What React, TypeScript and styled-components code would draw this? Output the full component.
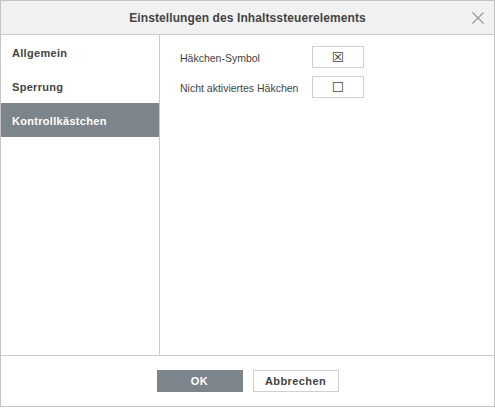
import React, { useState } from 'react';
import styled, { createGlobalStyle } from 'styled-components';

const GlobalStyle = createGlobalStyle`
    html, body {
        margin: 0;
        padding: 0;
        background: #ffffff;
    }
    body {
        font-family: 'Liberation Sans', Arial, sans-serif;
        color: #444444;
    }
`;

const MENU = ['Allgemein', 'Sperrung', 'Kontrollkästchen'];

const App: React.FC = () => {
    const [active, setActive] = useState(2);

    return (
        <>
            <GlobalStyle />
            <Dialog>
                <Header>
                    <Title>Einstellungen des Inhaltssteuerelements</Title>
                    <CloseButton aria-label="Schließen">
                        <svg width="12" height="12" viewBox="0 0 12 12">
                            <path
                                d="M0.5 0.5 L11.5 11.5 M11.5 0.5 L0.5 11.5"
                                stroke="#9a9a9a"
                                strokeWidth="1.2"
                                fill="none"
                            />
                        </svg>
                    </CloseButton>
                </Header>
                <Body>
                    <Sidebar>
                        {MENU.map((item, index) => (
                            <MenuItem
                                key={item}
                                $active={index === active}
                                onClick={() => setActive(index)}
                            >
                                {item}
                            </MenuItem>
                        ))}
                    </Sidebar>
                    <Content>
                        <Row>
                            <Label>Häkchen-Symbol</Label>
                            <SymbolButton>☒</SymbolButton>
                        </Row>
                        <Row>
                            <Label>Nicht aktiviertes Häkchen</Label>
                            <SymbolButton>☐</SymbolButton>
                        </Row>
                    </Content>
                </Body>
                <Footer>
                    <Button $primary>OK</Button>
                    <Button>Abbrechen</Button>
                </Footer>
            </Dialog>
        </>
    );
};

export default App;

const Dialog = styled.div`
    box-sizing: border-box;
    width: 495px;
    height: 407px;
    border: 1px solid #c4c4c4;
    display: flex;
    flex-direction: column;
    background: #ffffff;
`;

const Header = styled.div`
    position: relative;
    height: 33px;
    flex: none;
    background: #f1f1f1;
    border-bottom: 1px solid #cbcbcb;
    display: flex;
    align-items: center;
    justify-content: center;
`;

const Title = styled.div`
    font-size: 12px;
    font-weight: 700;
    color: #444444;
    letter-spacing: 0.1px;
`;

const CloseButton = styled.button`
    position: absolute;
    right: 10px;
    top: 11px;
    width: 12px;
    height: 12px;
    padding: 0;
    border: none;
    background: transparent;
    display: flex;
    cursor: pointer;
`;

const Body = styled.div`
    flex: 1;
    display: flex;
    border-bottom: 1px solid #cbcbcb;
`;

const Sidebar = styled.div`
    width: 158px;
    flex: none;
    border-right: 1px solid #cbcbcb;
    display: flex;
    flex-direction: column;
`;

const MenuItem = styled.div<{ $active?: boolean }>`
    box-sizing: border-box;
    height: 34px;
    display: flex;
    align-items: center;
    padding: 2px 0 0 11px;
    font-size: 11px;
    font-weight: 700;
    letter-spacing: 0.3px;
    cursor: pointer;
    color: ${(p) => (p.$active ? '#ffffff' : '#444444')};
    background: ${(p) => (p.$active ? '#7d858c' : 'transparent')};
`;

const Content = styled.div`
    flex: 1;
    padding: 11px 0 0 20px;
    display: flex;
    flex-direction: column;
    gap: 8px;
`;

const Row = styled.div`
    display: flex;
    align-items: center;
    height: 22px;
`;

const Label = styled.div`
    width: 132px;
    padding-top: 2px;
    font-size: 10.5px;
    color: #444444;
`;

const SymbolButton = styled.button`
    box-sizing: border-box;
    width: 52px;
    height: 22px;
    border: 1px solid #cfcfcf;
    background: #ffffff;
    padding: 0;
    font-family: 'DejaVu Sans', sans-serif;
    font-size: 14px;
    line-height: 1;
    color: #444444;
    display: flex;
    align-items: center;
    justify-content: center;
    cursor: pointer;
`;

const Footer = styled.div`
    height: 50px;
    flex: none;
    display: flex;
    justify-content: center;
    align-items: flex-start;
    padding-top: 14px;
    box-sizing: border-box;
    gap: 10px;
`;

const Button = styled.button<{ $primary?: boolean }>`
    box-sizing: border-box;
    width: 86px;
    height: 22px;
    font-family: 'Liberation Sans', Arial, sans-serif;
    font-size: 11px;
    font-weight: 700;
    letter-spacing: 0.4px;
    cursor: pointer;
    border: 1px solid ${(p) => (p.$primary ? '#7d858c' : '#cfcfcf')};
    background: ${(p) => (p.$primary ? '#7d858c' : '#ffffff')};
    color: ${(p) => (p.$primary ? '#ffffff' : '#444444')};
`;
